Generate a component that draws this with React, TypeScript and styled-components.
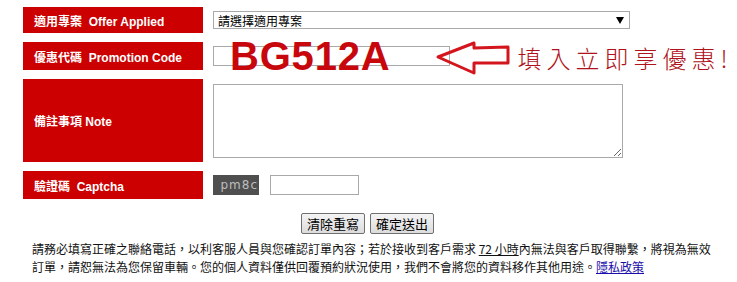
import React from 'react';
import styled, { createGlobalStyle } from 'styled-components';

const GlobalStyle = createGlobalStyle`
  body {
    margin: 0;
    background: #fff;
    font-family: "Liberation Sans", "Noto Sans CJK TC", sans-serif;
    font-size: 12px;
    color: #000;
  }
`;

const Page = styled.div`
  width: 737px;
  height: 282px;
  overflow: hidden;
  padding-top: 7px;
  box-sizing: border-box;
`;

const Form = styled.div`
  display: flex;
  flex-direction: column;
  gap: 9px;
  padding-left: 23px;
`;

const Row = styled.div<{ height: number }>`
  display: flex;
  height: ${(props) => props.height}px;
`;

const Label = styled.div`
  width: 180px;
  flex-shrink: 0;
  background: #cc0000;
  color: #fff;
  font-weight: bold;
  font-size: 12px;
  display: flex;
  align-items: center;
  padding-left: 11px;
  box-sizing: border-box;
  white-space: pre;
`;

const Field = styled.div`
  position: relative;
  flex: 1;
  display: flex;
  align-items: center;
  padding-left: 10px;
`;

const Select = styled.div`
  width: 417px;
  height: 18px;
  border: 1px solid #a9a9a9;
  box-sizing: border-box;
  display: flex;
  align-items: center;
  justify-content: space-between;
  padding: 0 5px 0 4px;
  font-size: 12px;
`;

const TextInput = styled.input<{ w: number }>`
  width: ${(props) => props.w}px;
  height: 20px;
  border: 1px solid #a9a9a9;
  box-sizing: border-box;
  margin: 0;
  padding: 0 3px;
  font-size: 12px;
  outline: none;
`;

const TextArea = styled.textarea`
  width: 410px;
  height: 74px;
  border: 1px solid #a9a9a9;
  box-sizing: border-box;
  margin: 0;
  font-size: 12px;
  outline: none;
`;

const Overlay = styled.div`
  position: absolute;
  left: 27px;
  top: -6px;
  height: 40px;
  display: flex;
  align-items: center;
  pointer-events: none;
`;

const Code = styled.span`
  font-family: "Liberation Sans", sans-serif;
  font-weight: bold;
  font-size: 40px;
  line-height: 40px;
  letter-spacing: 0.8px;
  color: #c8070d;
`;

const Slogan = styled.span`
  margin-left: 7px;
  margin-top: 3px;
  font-family: "Noto Sans CJK TC", serif;
  font-weight: 300;
  font-size: 24px;
  letter-spacing: 5px;
  color: #b0121b;
  white-space: nowrap;
`;

const Captcha = styled.div`
  width: 46px;
  height: 20px;
  background: #4f4f4f;
  color: #bdbdbd;
  font-family: "DejaVu Sans", sans-serif;
  font-size: 12px;
  letter-spacing: 1px;
  display: flex;
  align-items: center;
  justify-content: flex-end;
  padding-right: 1px;
  box-sizing: border-box;
  margin-right: 11px;
`;

const Buttons = styled.div`
  display: flex;
  justify-content: center;
  gap: 5px;
  margin-top: 14px;
  padding-right: 2px;
`;

const Button = styled.button`
  width: 64px;
  height: 21px;
  padding: 0;
  border: 1px solid #707070;
  border-radius: 2px;
  background: linear-gradient(#f4f4f4, #dcdcdc);
  font-family: "Noto Sans CJK TC", sans-serif;
  font-size: 13px;
  line-height: 19px;
  color: #000;
`;

const Note = styled.p`
  margin: 6px 0 0 32px;
  width: 690px;
  font-family: "Noto Sans CJK TC", sans-serif;
  font-size: 12px;
  line-height: 18px;
  color: #111;
`;

const Under = styled.span`
  text-decoration: underline;
`;

const Link = styled.a`
  color: #1a0dab;
  text-decoration: underline;
`;

const ArrowSvg = styled.svg`
  margin-left: 46px;
  margin-top: 3px;
  flex-shrink: 0;
`;

const Arrow = () => (
  <ArrowSvg width="74" height="35" viewBox="0 0 74 35">
    <path
      d="M2 17 L38 3 L38 8 L72 7 L72 23 L38 23 L38 33 Z"
      fill="none"
      stroke="#d3151d"
      strokeWidth="3"
      strokeLinejoin="round"
    />
  </ArrowSvg>
);

const App = () => (
  <Page>
    <GlobalStyle />
    <Form>
      <Row height={26}>
        <Label>適用專案  Offer Applied</Label>
        <Field>
          <Select>
            <span>請選擇適用專案</span>
            <svg width="8" height="7" viewBox="0 0 8 7">
              <path d="M0 0 H8 L4 7 Z" fill="#000" />
            </svg>
          </Select>
        </Field>
      </Row>
      <Row height={28}>
        <Label>優惠代碼  Promotion Code</Label>
        <Field>
          <TextInput w={237} />
          <Overlay>
            <Code>BG512A</Code>
            <Arrow />
            <Slogan>填入立即享優惠!</Slogan>
          </Overlay>
        </Field>
      </Row>
      <Row height={83}>
        <Label>備註事項 Note</Label>
        <Field>
          <TextArea />
        </Field>
      </Row>
      <Row height={28}>
        <Label>驗證碼  Captcha</Label>
        <Field>
          <Captcha>pm8c</Captcha>
          <TextInput w={89} />
        </Field>
      </Row>
    </Form>
    <Buttons>
      <Button>清除重寫</Button>
      <Button>確定送出</Button>
    </Buttons>
    <Note>
      請務必填寫正確之聯絡電話，以利客服人員與您確認訂單內容；若於接收到客戶需求 <Under>72 小時</Under>內無法與客戶取得聯繫，將視為無效訂單，請恕無法為您保留車輛。您的個人資料僅供回覆預約狀況使用，我們不會將您的資料移作其他用途。<Link href="#">隱私政策</Link>
    </Note>
  </Page>
);

export default App;
